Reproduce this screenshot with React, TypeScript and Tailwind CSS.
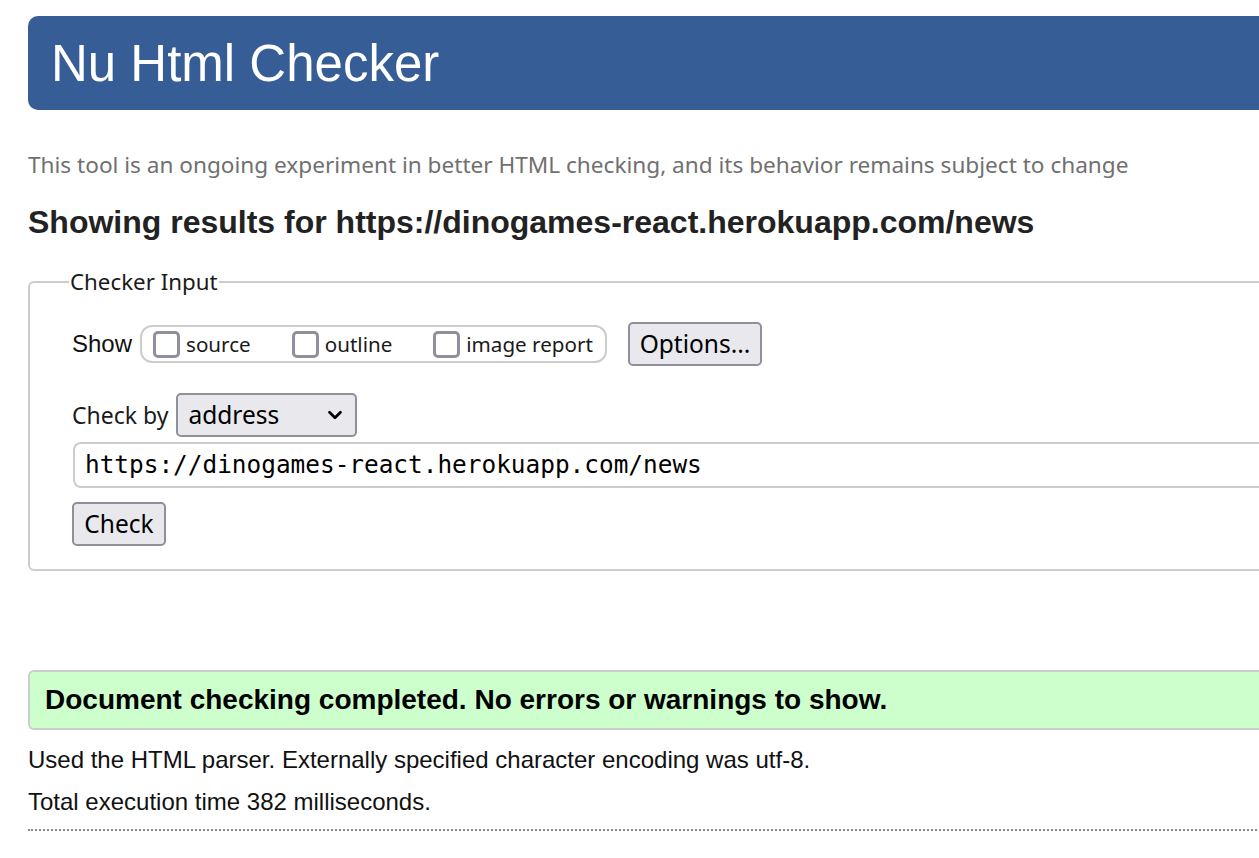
import { ChevronDown } from 'lucide-react'

const segoe = "font-['Noto_Sans','Open_Sans',sans-serif]"
const arial = "font-['Liberation_Sans',Arial,sans-serif]"

function Box({ label }: { label: string }) {
  return (
    <label className="flex items-center gap-[6px]">
      <span className="inline-block h-[27px] w-[27px] rounded-[5px] border-[3px] border-[#8f8f9d] bg-white" />
      <span className="text-[20.6px] leading-none text-[#1a1a1a]">{label}</span>
    </label>
  )
}

export default function App() {
  return (
    <div className="w-full overflow-hidden bg-white">
      <div className="w-[1400px] pl-[28px] pt-[16px] text-black">
        <header className="flex h-[94px] items-center rounded-l-[10px] bg-[#365d95] pl-[23px]">
          <h1 className={`${arial} text-[51px] leading-none text-white`}>Nu Html Checker</h1>
        </header>

        <p className={`${segoe} mt-[41px] text-[22.6px] leading-[28px] text-[#707070]`}>
          This tool is an ongoing experiment in better HTML checking, and its behavior remains subject to change
        </p>

        <h2 className={`${arial} mt-[24px] text-[32px] font-bold leading-[38px] text-[#222]`}>
          Showing results for https://dinogames-react.herokuapp.com/news
        </h2>

        <fieldset className={`${segoe} mt-[27px] rounded-[6px] border-2 border-[#ccc] pb-[23px] pl-[42px] pt-[26px]`}>
          <legend className="-ml-[3px] px-[1px] text-[22.3px] leading-[28px] text-[#1a1a1a]">Checker Input</legend>

          <div className="flex h-[44px] items-center">
            <span className={`${arial} mr-[8px] text-[24px] text-[#111]`}>Show</span>
            <div className="flex h-[38px] w-[467px] items-center gap-[41px] rounded-[12px] border-2 border-[#ccc] pl-[11px]">
              <Box label="source" />
              <Box label="outline" />
              <Box label="image report" />
            </div>
            <button className="ml-[21px] h-[44px] w-[134px] rounded-[5px] border-2 border-[#8f8f9d] bg-[#e9e9ed] text-[24.5px] leading-none text-black">
              Options...
            </button>
          </div>

          <div className="mt-[27px] flex items-center">
            <span className="mr-[8px] text-[23px] text-[#1a1a1a]">Check by</span>
            <div className="flex h-[44px] w-[181px] items-center justify-between rounded-[5px] border-2 border-[#8f8f9d] bg-[#e9e9ed] pl-[10px] pr-[9px]">
              <span className="text-[24.5px] leading-none text-black">address</span>
              <ChevronDown size={22} strokeWidth={3} className="text-black" />
            </div>
          </div>

          <div className="mt-[5px] ml-[1px] flex h-[46px] items-center rounded-l-[8px] border-2 border-r-0 border-[#ccc] pl-[10px]">
            <span className="font-['DejaVu_Sans_Mono',monospace] text-[24.4px] text-black">https://dinogames-react.herokuapp.com/news</span>
          </div>

          <button className="mt-[14px] h-[44px] w-[94px] rounded-[5px] border-2 border-[#8f8f9d] bg-[#e9e9ed] text-[24.5px] leading-none text-black">
            Check
          </button>
        </fieldset>

        <div className="mt-[99px] flex h-[60px] items-center rounded-l-[6px] border-2 border-r-0 border-[#ccc] bg-[#ccffcc] pl-[15px]">
          <span className={`${arial} text-[28px] font-bold leading-none text-black`}>
            Document checking completed. No errors or warnings to show.
          </span>
        </div>

        <div className={`${arial} text-[24px] text-[#111]`}>
          <p className="mt-[16px] leading-[28px]">Used the HTML parser. Externally specified character encoding was utf-8.</p>
          <p className="mt-[14px] leading-[28px]">Total execution time 382 milliseconds.</p>
        </div>

        <hr className="mt-[13px] border-0 border-t-2 border-dotted border-[#888]" />
      </div>
    </div>
  )
}
